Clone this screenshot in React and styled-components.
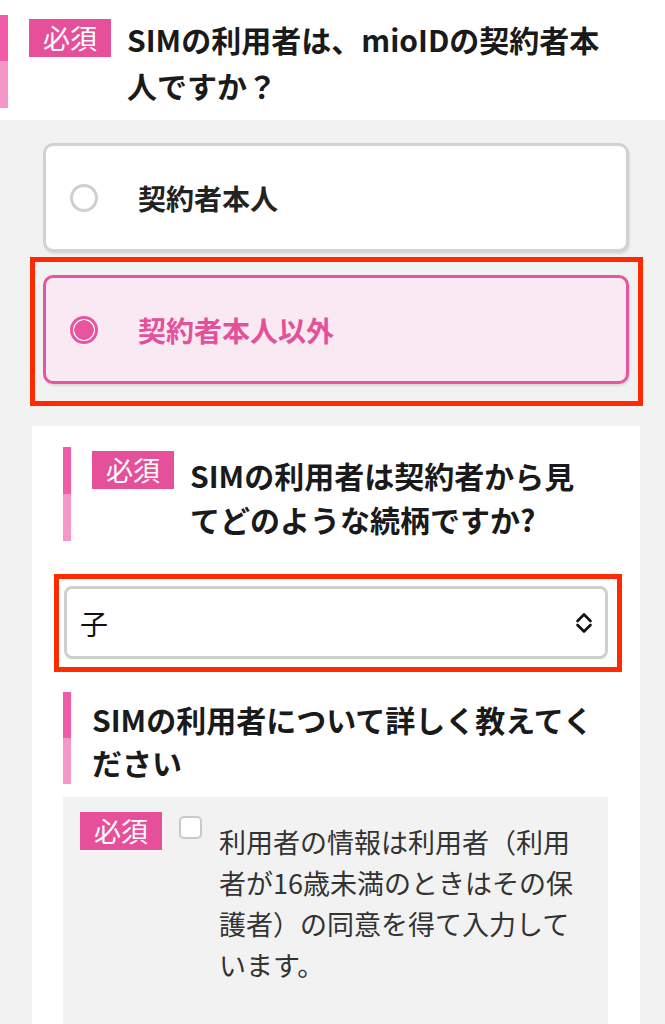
import * as React from 'react';
import styled, { createGlobalStyle } from 'styled-components';

const GlobalStyle = createGlobalStyle`
  html, body {
    margin: 0;
    padding: 0;
    background: #f2f2f2;
  }
  body {
    font-family: 'Noto Sans CJK JP', 'Noto Sans', sans-serif;
    color: #1a1a1a;
  }
  * {
    box-sizing: border-box;
  }
`;

const Page = styled.div`
  width: 665px;
  min-height: 1024px;
  background: #f2f2f2;
  overflow: hidden;
`;

const TopSection = styled.section`
  background: #fff;
  padding: 15px 50px 12px 0;
`;

const Heading = styled.div`
  display: flex;
  align-items: flex-start;
  gap: 16px;
  padding-left: 29px;
  padding-right: ${(props) => props.$pr || 0}px;
  background: linear-gradient(to bottom, #f05ca8 50%, #f598c8 50%) left top / 8px 100% no-repeat;
  margin-top: ${(props) => props.$mt || 0}px;
`;

const Badge = styled.span`
  flex: none;
  height: 38px;
  padding: 0 14px;
  margin-top: ${(props) => (props.$mt === undefined ? 4 : props.$mt)}px;
  background: #e6509a;
  color: #fff;
  font-size: 27px;
  line-height: 38px;
  font-weight: 400;
`;

const HeadingText = styled.h2`
  margin: 0;
  padding-top: ${(props) => props.$pt}px;
  font-size: 30px;
  font-weight: 700;
  line-height: ${(props) => props.$lh}px;
  color: #1a1a1a;
`;

const Body = styled.main`
  padding: 23px 25px 0 32px;
`;

const Choices = styled.div`
  display: flex;
  flex-direction: column;
  margin: 0 11px;
`;

const ChoiceCard = styled.label`
  display: flex;
  align-items: center;
  gap: 40px;
  height: 109px;
  padding: 0 24px;
  border: 3px solid ${(props) => (props.$checked ? '#e8559f' : '#d2d2d2')};
  border-radius: 10px;
  background: ${(props) => (props.$checked ? '#f9e9f2' : '#fff')};
  box-shadow: 1px 2px 2px rgba(0, 0, 0, 0.1);
  color: ${(props) => (props.$checked ? '#e4519b' : '#222')};
  font-size: 28px;
  font-weight: 700;
`;

const Radio = styled.span`
  flex: none;
  width: 28px;
  height: 28px;
  border-radius: 50%;
  border: 3px solid ${(props) => (props.$checked ? '#e8559f' : '#cfcfcf')};
  background: ${(props) =>
    props.$checked ? 'radial-gradient(circle, #e8559f 0 9.5px, #fff 10px)' : '#fff'};
`;

const Annotation = styled.div`
  border: 5px solid #ff2a00;
  padding: ${(props) => props.$pad};
  margin: ${(props) => props.$margin};
`;

const Panel = styled.section`
  margin-top: 20px;
  background: #fff;
  padding: 21px 32px 40px 31px;
`;

const SelectWrap = styled.div`
  position: relative;
  height: 73px;
  border: 3px solid #cfcfcf;
  border-radius: 8px;
  background: #fff;
`;

const Select = styled.select`
  appearance: none;
  width: 100%;
  height: 100%;
  border: 0;
  background: transparent;
  padding: 0 40px 0 13px;
  font-family: inherit;
  font-size: 28px;
  color: #111;
  outline: none;
`;

const Chevron = styled.svg`
  position: absolute;
  right: 12px;
  top: 50%;
  transform: translateY(-50%);
  pointer-events: none;
`;

const ConsentBox = styled.div`
  display: flex;
  align-items: flex-start;
  gap: 17px;
  margin-top: 13px;
  padding: 15px 24px 70px 17px;
  background: #f2f2f2;
`;

const Checkbox = styled.span`
  flex: none;
  width: 23px;
  height: 23px;
  margin-top: 4px;
  border: 2px solid #c9c9c9;
  border-radius: 5px;
  background: #fff;
`;

const ConsentText = styled.p`
  margin: 9px 0 0;
  width: 366px;
  font-size: 27px;
  line-height: 41px;
  color: #333;
`;

const choices = [
  { label: '契約者本人', checked: false },
  { label: '契約者本人以外', checked: true },
];

const App = () => (
  <Page>
    <GlobalStyle />
    <TopSection>
      <Heading>
        <Badge>必須</Badge>
        <HeadingText $pt={1} $lh={46}>
          SIMの利用者は、mioIDの契約者本人ですか？
        </HeadingText>
      </Heading>
    </TopSection>

    <Body>
      <Choices>
        <ChoiceCard>
          <Radio />
          {choices[0].label}
        </ChoiceCard>
        <Annotation $pad="13px 9px 17px 8px" $margin="5px -14px 0 -13px">
          <ChoiceCard $checked>
            <Radio $checked />
            {choices[1].label}
          </ChoiceCard>
        </Annotation>
      </Choices>

      <Panel>
        <Heading $pr={12}>
          <Badge>必須</Badge>
          <HeadingText $pt={6} $lh={44}>
            SIMの利用者は契約者から見てどのような続柄ですか?
          </HeadingText>
        </Heading>

        <Annotation $pad="7px 9px 8px 5px" $margin="33px -14px 0 -9px">
          <SelectWrap>
            <Select defaultValue="child">
              <option value="child">子</option>
              <option value="spouse">配偶者</option>
              <option value="parent">親</option>
            </Select>
            <Chevron width="18" height="22" viewBox="0 0 18 22" fill="none">
              <path d="M2.5 9 L9 2.5 L15.5 9" stroke="#111" strokeWidth="2.6" strokeLinecap="round" strokeLinejoin="round" />
              <path d="M2.5 13 L9 19.5 L15.5 13" stroke="#111" strokeWidth="2.6" strokeLinecap="round" strokeLinejoin="round" />
            </Chevron>
          </SelectWrap>
        </Annotation>

        <Heading $mt={20} $pr={12}>
          <HeadingText $pt={6} $lh={43}>
            SIMの利用者について詳しく教えてください
          </HeadingText>
        </Heading>

        <ConsentBox>
          <Badge $mt={0}>必須</Badge>
          <Checkbox />
          <ConsentText>
            利用者の情報は利用者（利用者が16歳未満のときはその保護者）の同意を得て入力しています。
          </ConsentText>
        </ConsentBox>
      </Panel>
    </Body>
  </Page>
);

export default App;
